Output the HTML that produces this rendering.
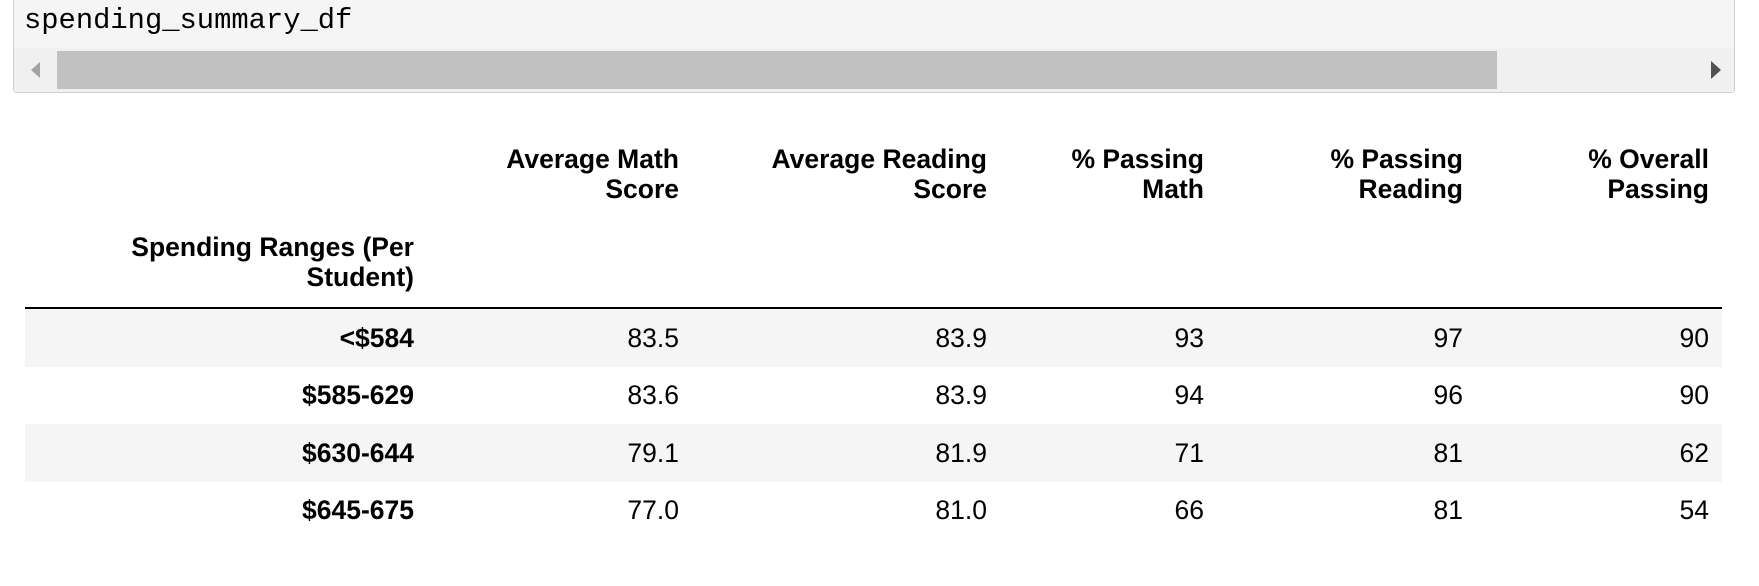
<!DOCTYPE html>
<html><head><style>
body{margin:0;width:1759px;height:586px;background:#fff;position:relative;overflow:hidden;font-family:"Liberation Sans",Arial,sans-serif;color:#000}
.code{position:absolute;left:13px;top:-2px;width:1722px;height:95px;background:#f5f5f5;border:1px solid #cfcfcf;border-radius:3px;box-sizing:border-box}
.code .t{position:absolute;left:10px;top:5px;font-family:"Liberation Mono",monospace;font-size:28.8px;line-height:34px;color:#000}
.sb{position:absolute;left:0;top:49px;width:1720px;height:44px;background:#f0f0f0}
.thumb{position:absolute;left:43px;top:3px;width:1440px;height:38px;background:#c1c1c1}
.l{position:absolute;left:17px;top:14px;width:0;height:0;border-top:8px solid transparent;border-bottom:8px solid transparent;border-right:9px solid #a3a3a3}
.r{position:absolute;left:1697px;top:13px;width:0;height:0;border-top:9px solid transparent;border-bottom:9px solid transparent;border-left:10px solid #505050}
.h{position:absolute;font-weight:bold;font-size:26.5px;line-height:30px;text-align:right}
.row{position:absolute;left:25px;width:1697px;height:58px}
.c{position:absolute;font-size:26.5px;line-height:58px;text-align:right}
.b{font-weight:bold}
.line{position:absolute;left:25px;top:307px;width:1697px;height:2px;background:#000}
</style></head><body>
<div class="code"><div class="t">spending_summary_df</div>
<div class="sb"><div class="thumb"></div><div class="l"></div><div class="r"></div></div></div>

<div class="h" style="right:1080px;top:144px;width:300px">Average Math<br>Score</div>
<div class="h" style="right:772px;top:144px;width:300px">Average Reading<br>Score</div>
<div class="h" style="right:555px;top:144px;width:300px">% Passing<br>Math</div>
<div class="h" style="right:296px;top:144px;width:300px">% Passing<br>Reading</div>
<div class="h" style="right:50px;top:144px;width:300px">% Overall<br>Passing</div>
<div class="h" style="right:1345px;top:232px;width:400px">Spending Ranges (Per<br>Student)</div>
<div class="line"></div>

<div class="row" style="top:309px;background:#f5f5f5"></div>
<div class="row" style="top:424px;background:#f5f5f5"></div>

<div style="position:absolute;left:0;top:309px;width:1759px">
<div style="position:relative;height:57px">
<div class="c b" style="right:1345px">&lt;$584</div><div class="c" style="right:1080px">83.5</div><div class="c" style="right:772px">83.9</div><div class="c" style="right:555px">93</div><div class="c" style="right:296px">97</div><div class="c" style="right:50px">90</div></div>
<div style="position:relative;height:58px">
<div class="c b" style="right:1345px">$585-629</div><div class="c" style="right:1080px">83.6</div><div class="c" style="right:772px">83.9</div><div class="c" style="right:555px">94</div><div class="c" style="right:296px">96</div><div class="c" style="right:50px">90</div></div>
<div style="position:relative;height:57px">
<div class="c b" style="right:1345px">$630-644</div><div class="c" style="right:1080px">79.1</div><div class="c" style="right:772px">81.9</div><div class="c" style="right:555px">71</div><div class="c" style="right:296px">81</div><div class="c" style="right:50px">62</div></div>
<div style="position:relative;height:58px">
<div class="c b" style="right:1345px">$645-675</div><div class="c" style="right:1080px">77.0</div><div class="c" style="right:772px">81.0</div><div class="c" style="right:555px">66</div><div class="c" style="right:296px">81</div><div class="c" style="right:50px">54</div></div>
</div>
</body></html>
